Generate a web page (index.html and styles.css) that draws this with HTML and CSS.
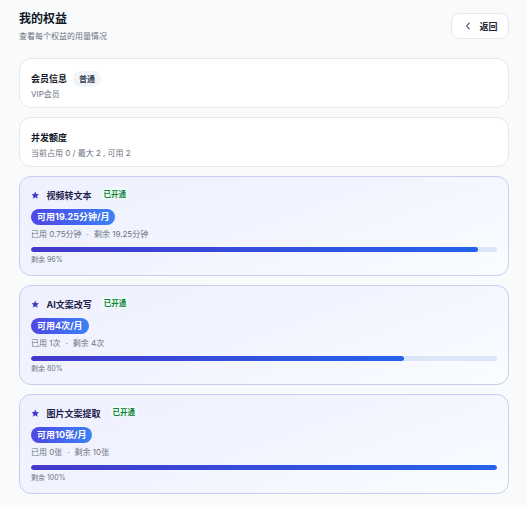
FILE: index.html
```html
<!DOCTYPE html>
<html lang="zh">
<head>
<meta charset="utf-8">
<link rel="stylesheet" href="styles.css">
</head>
<body>
<div class="page">
  <header class="head">
    <div>
      <h1 class="title">我的权益</h1>
      <p class="subtitle">查看每个权益的用量情况</p>
    </div>
    <button class="back"><svg width="8" height="8" viewBox="0 0 8 8"><path d="M5.2 1.2 2.6 4l2.6 2.8" fill="none" stroke="#374151" stroke-width="1.1" stroke-linecap="round" stroke-linejoin="round"/></svg><span>返回</span></button>
  </header>

  <section class="card plain">
    <div class="row"><span class="ctitle">会员信息</span><span class="tag">普通</span></div>
    <div class="muted">VIP会员</div>
  </section>

  <section class="card plain">
    <div class="row"><span class="ctitle">并发额度</span></div>
    <div class="muted">当前占用 0 / 最大 2 , 可用 2</div>
  </section>

  <section class="card benefit">
    <div class="row"><svg class="star" viewBox="0 0 10 10"><path d="M5 .6l1.3 2.9 3.1.3-2.3 2.1.7 3.1L5 7.4 2.2 9l.7-3.1L.6 3.8l3.1-.3z" fill="#4338ca"/></svg><span class="btitle">视频转文本</span><span class="on">已开通</span></div>
    <div class="pill">可用19.25分钟/月</div>
    <div class="muted">已用 0.75分钟<span class="dot">·</span>剩余 19.25分钟</div>
    <div class="track"><div class="fill" style="width:96%"></div></div>
    <div class="tiny">剩余 96%</div>
  </section>

  <section class="card benefit">
    <div class="row"><svg class="star" viewBox="0 0 10 10"><path d="M5 .6l1.3 2.9 3.1.3-2.3 2.1.7 3.1L5 7.4 2.2 9l.7-3.1L.6 3.8l3.1-.3z" fill="#4338ca"/></svg><span class="btitle">AI文案改写</span><span class="on">已开通</span></div>
    <div class="pill">可用4次/月</div>
    <div class="muted">已用 1次<span class="dot">·</span>剩余 4次</div>
    <div class="track"><div class="fill" style="width:80%"></div></div>
    <div class="tiny">剩余 80%</div>
  </section>

  <section class="card benefit">
    <div class="row"><svg class="star" viewBox="0 0 10 10"><path d="M5 .6l1.3 2.9 3.1.3-2.3 2.1.7 3.1L5 7.4 2.2 9l.7-3.1L.6 3.8l3.1-.3z" fill="#4338ca"/></svg><span class="btitle">图片文案提取</span><span class="on">已开通</span></div>
    <div class="pill">可用10张/月</div>
    <div class="muted">已用 0张<span class="dot">·</span>剩余 10张</div>
    <div class="track"><div class="fill" style="width:100%"></div></div>
    <div class="tiny">剩余 100%</div>
  </section>
</div>
</body>
</html>
```
FILE: styles.css
```css
* { box-sizing: border-box; }
html, body { margin: 0; padding: 0; background: #f8fafc; }
body {
  font-family: Inter, "Noto Sans CJK SC", sans-serif;
  color: #111827;
  width: 527px;
  height: 505px;
  overflow: hidden;
}
.page {
  padding: 10px 18px 0 19px;
  display: flex;
  flex-direction: column;
  gap: 9px;
}
.head {
  display: flex;
  justify-content: space-between;
  align-items: flex-start;
  margin-bottom: 7px;
}
.title {
  margin: 0;
  font-size: 12px;
  line-height: 17px;
  font-weight: 700;
  color: #111827;
}
.subtitle {
  margin: 3px 0 0;
  font-size: 8px;
  line-height: 12px;
  color: #6b7280;
}
.back {
  margin-top: 3px;
  width: 58px;
  height: 26px;
  border: 1px solid #e5e7eb;
  background: #fff;
  border-radius: 8px;
  display: flex;
  align-items: center;
  justify-content: center;
  gap: 7px;
  padding: 0 0 0 2px;
  font-family: inherit;
  font-size: 9px;
  font-weight: 600;
  color: #1f2937;
}
.card {
  border-radius: 12px;
  border: 1px solid #e5e7eb;
  background: #fff;
  padding: 11px 11px 10px;
}
.plain { height: 50px; }
.row {
  display: flex;
  align-items: center;
  height: 17px;
}
.ctitle {
  font-size: 9px;
  font-weight: 700;
  color: #111827;
}
.tag {
  margin-left: 6px;
  padding: 0 6px;
  height: 16px;
  line-height: 16px;
  border-radius: 8px;
  background: #f1f5f9;
  font-size: 8px;
  font-weight: 600;
  color: #374151;
}
.muted {
  margin-top: 1px;
  font-size: 8px;
  line-height: 12px;
  color: #6b7280;
}
.dot { margin: 0 5px; }
.benefit {
  height: 100px;
  border-color: #c9cdf3;
  background: linear-gradient(160deg, #eef1fe 0%, #f2f5ff 50%, #fafcff 100%);
  padding-top: 10px;
}
.star { width: 8.5px; height: 8.5px; margin-right: 7px; }
.btitle {
  font-size: 9px;
  font-weight: 700;
  color: #1e1b4b;
}
.on {
  margin-left: 10px;
  margin-top: -4px;
  font-size: 7.5px;
  font-weight: 600;
  color: #15803d;
  background: #ecfdf5;
  padding: 0 2px;
}
.pill {
  align-self: flex-start;
  display: inline-block;
  margin-top: 1px;
  height: 16px;
  line-height: 16px;
  padding: 0 6px;
  border-radius: 8px;
  background: linear-gradient(90deg, #4f46e5, #3b82f6);
  color: #fff;
  font-size: 9px;
  font-weight: 700;
}
.benefit .muted { margin-top: 3px; }
.track {
  margin-top: 7px;
  height: 5px;
  border-radius: 3px;
  background: #dde5f8;
  overflow: hidden;
}
.fill {
  height: 100%;
  border-radius: 3px;
  background: linear-gradient(90deg, #4338ca, #2563eb);
}
.tiny {
  margin-top: 2px;
  font-size: 7px;
  line-height: 11px;
  color: #6b7280;
}
```
